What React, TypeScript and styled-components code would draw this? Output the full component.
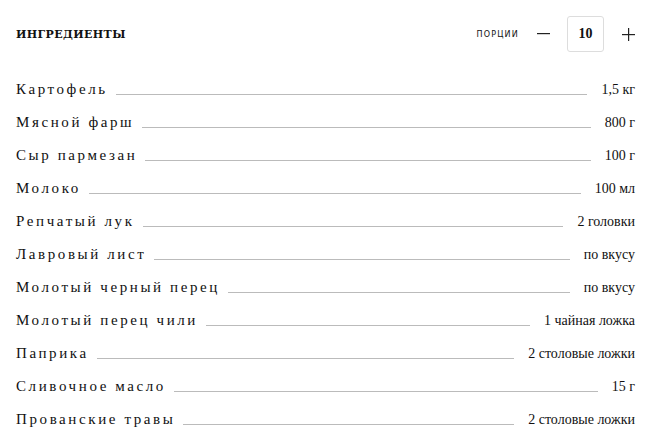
import styled, { createGlobalStyle } from "styled-components";

const GlobalStyle = createGlobalStyle`
  * {
    box-sizing: border-box;
    margin: 0;
    padding: 0;
  }
  body {
    background: #fff;
    color: #111;
    font-family: "Liberation Serif", serif;
  }
`;

const Wrapper = styled.div`
  width: 656px;
  padding: 16px 16px 0 16px;
`;

const Header = styled.div`
  display: flex;
  align-items: center;
  justify-content: space-between;
  height: 36px;
  margin-bottom: 29px;
`;

const Title = styled.h2`
  font-family: "DejaVu Serif", serif;
  font-size: 11px;
  font-weight: bold;
  letter-spacing: 0.4px;
  color: #111;
`;

const Portions = styled.div`
  display: flex;
  align-items: center;
`;

const PortionsLabel = styled.span`
  font-family: "DejaVu Sans", sans-serif;
  font-size: 8px;
  letter-spacing: 1.2px;
  margin-right: 12px;
`;

const StepButton = styled.button`
  border: none;
  background: transparent;
  width: 24px;
  height: 24px;
  display: flex;
  align-items: center;
  justify-content: center;
  cursor: pointer;
  color: #222;
`;

const Counter = styled.div`
  width: 37px;
  height: 36px;
  border: 1px solid #ddd;
  border-radius: 3px;
  display: flex;
  align-items: center;
  justify-content: center;
  font-family: "Liberation Serif", serif;
  font-weight: bold;
  font-size: 14px;
  margin: 0 12px;
`;

const List = styled.ul`
  list-style: none;
  padding-right: 5px;
`;

const Row = styled.li`
  display: flex;
  align-items: baseline;
  height: 33px;
`;

const Name = styled.span`
  font-size: 15px;
  letter-spacing: 2.6px;
  white-space: nowrap;
`;

const Dots = styled.span`
  flex: 1;
  border-bottom: 1px solid #bbb;
  margin: 0 14px 0 8px;
  transform: translateY(1px);
`;

const Amount = styled.span`
  font-size: 14px;
  white-space: nowrap;
`;

const ingredients: [string, string][] = [
  ["Картофель", "1,5 кг"],
  ["Мясной фарш", "800 г"],
  ["Сыр пармезан", "100 г"],
  ["Молоко", "100 мл"],
  ["Репчатый лук", "2 головки"],
  ["Лавровый лист", "по вкусу"],
  ["Молотый черный перец", "по вкусу"],
  ["Молотый перец чили", "1 чайная ложка"],
  ["Паприка", "2 столовые ложки"],
  ["Сливочное масло", "15 г"],
  ["Прованские травы", "2 столовые ложки"],
];

export default function App() {
  return (
    <Wrapper>
      <GlobalStyle />
      <Header>
        <Title>ИНГРЕДИЕНТЫ</Title>
        <Portions>
          <PortionsLabel>ПОРЦИИ</PortionsLabel>
          <StepButton aria-label="minus">
            <svg width="13" height="2" viewBox="0 0 13 2">
              <rect width="13" height="1.2" fill="#222" />
            </svg>
          </StepButton>
          <Counter>10</Counter>
          <StepButton aria-label="plus">
            <svg width="13" height="13" viewBox="0 0 13 13">
              <rect y="6" width="13" height="1.2" fill="#222" />
              <rect x="6" width="1.2" height="13" fill="#222" />
            </svg>
          </StepButton>
        </Portions>
      </Header>
      <List>
        {ingredients.map(([name, amount]) => (
          <Row key={name}>
            <Name>{name}</Name>
            <Dots />
            <Amount>{amount}</Amount>
          </Row>
        ))}
      </List>
    </Wrapper>
  );
}
